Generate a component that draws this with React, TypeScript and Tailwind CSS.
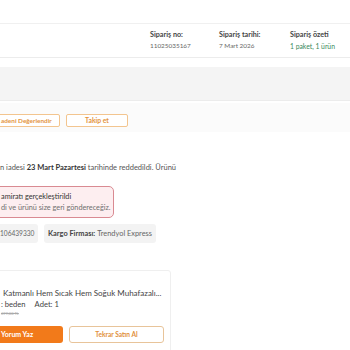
export default function App() {
  return (
    <div className="w-[350px] h-[350px] overflow-hidden bg-white font-['Lato',sans-serif] text-[#333]">
      <div className="h-[24px] border-b border-[#f0f0f0]" />
      <div className="h-[34px] border-b border-[#ececec] flex items-center">
        <div className="ml-[150px] w-[69px] flex flex-col gap-[3px]">
          <span className="text-[7.2px] font-bold leading-[8px] text-[#444]">Sipariş no:</span>
          <span className="text-[6.4px] leading-[8px] text-[#666]">11025035167</span>
        </div>
        <div className="w-[71px] flex flex-col gap-[3px]">
          <span className="text-[7.2px] font-bold leading-[8px] text-[#444]">Sipariş tarihi:</span>
          <span className="text-[6.4px] leading-[8px] text-[#666]">7 Mart 2026</span>
        </div>
        <div className="flex flex-col gap-[3px]">
          <span className="text-[7.2px] font-bold leading-[8px] text-[#444]">Sipariş özeti</span>
          <span className="text-[6.8px] leading-[8px] text-[#3a8a5c]">1 paket, 1 ürün</span>
        </div>
      </div>
      <div className="h-[9px]" />
      <div className="h-[34px] bg-[#f4f4f4] border-b border-[#ececec]" />
      <div className="mt-[2px] h-[29px] bg-[#fbfbfb] flex items-center gap-[6px] pt-[6px]">
        <button className="ml-[-4px] w-[64px] h-[13px] rounded-[2px] border border-[#f3c58f] bg-white text-[6.4px] font-bold text-[#e3933c] flex items-center justify-start pl-[4px] whitespace-nowrap">
          adeni Değerlendir
        </button>
        <button className="w-[62px] h-[13px] rounded-[2px] border border-[#f3c58f] bg-white text-[6.8px] font-bold text-[#e3933c] flex items-center justify-center">
          Takip et
        </button>
      </div>
      <p className="mt-[31px] whitespace-nowrap text-[7.5px] leading-[9px] text-[#555]">
        n iadesi <b className="text-[#333]">23 Mart Pazartesi</b> tarihinde reddedildi. Ürünü
      </p>
      <div className="mt-[14px] ml-[-12px] w-[126px] h-[32px] rounded-[5px] border border-[#d98a92] bg-[#fdeef0] flex flex-col justify-center gap-[3px] pl-[12px]">
        <span className="text-[7.3px] leading-[8px] text-[#333] whitespace-nowrap">amiratı gerçekleştirildi</span>
        <span className="text-[7.3px] leading-[8px] text-[#6f6f6f] whitespace-nowrap">di ve ürünü size geri göndereceğiz.</span>
      </div>
      <div className="mt-[6px] flex gap-[6px]">
        <div className="ml-[-10px] w-[48px] h-[19px] rounded-[3px] bg-[#f3f3f3] flex items-center justify-start pl-[10px] text-[6.6px] text-[#666]">
          106439330
        </div>
        <div className="w-[112px] h-[19px] rounded-[3px] bg-[#f3f3f3] flex items-center justify-center text-[7.4px] text-[#666] whitespace-nowrap">
          <b className="text-[#444] mr-[2px]">Kargo Firması:</b> Trendyol Express
        </div>
      </div>
      <div className="mt-[27px] ml-[-20px] w-[191px] h-[92px] rounded-[3px] border border-[#efefef] pl-[20px] pt-[17px]">
        <div className="ml-[2px] text-[8px] leading-[10px] text-[#444] whitespace-nowrap">
          Katmanlı Hem Sıcak Hem Soğuk Muhafazalı...
        </div>
        <div className="mt-[1px] text-[7.6px] leading-[10px] text-[#444] whitespace-nowrap">
          : beden<span className="ml-[9px]">Adet: 1</span>
        </div>
        <div className="mt-[1px] text-[4px] leading-[8px] text-[#aaa] line-through">699,00 TL</div>
        <div className="mt-[8px] flex gap-[6px]">
          <button className="ml-[-20px] w-[82px] h-[17px] rounded-[3px] bg-[#f27a1a] text-white text-[7px] font-bold flex items-center justify-start pl-[20px] whitespace-nowrap">
            Yorum Yaz
          </button>
          <button className="w-[95px] h-[17px] rounded-[3px] border border-[#e8c49a] bg-white text-[#df8f3c] text-[6.6px] font-bold flex items-center justify-center">
            Tekrar Satın Al
          </button>
        </div>
      </div>
    </div>
  );
}
